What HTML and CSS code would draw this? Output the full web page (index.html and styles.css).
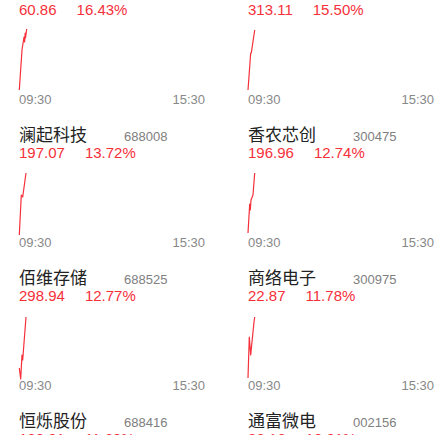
FILE: index.html
```html
<!DOCTYPE html>
<html lang="zh-CN">
<head>
<meta charset="utf-8">
<link rel="stylesheet" href="styles.css">
</head>
<body>
<div class="grid">
  <div class="cell">
    <div class="head"><span class="name">中微半导</span><span class="code">688380</span></div>
    <div class="quote"><span class="price">60.86</span><span class="pct">16.43%</span></div>
    <svg class="chart" viewBox="0 0 186 76"><polyline points="0.3,72 3,32 5,19 5.6,24 6.2,15 6.5,20 7.7,11"/></svg>
    <div class="times"><span>09:30</span><span>15:30</span></div>
  </div>
  <div class="cell">
    <div class="head"><span class="name">兆易创新</span><span class="code">603986</span></div>
    <div class="quote"><span class="price">313.11</span><span class="pct">15.50%</span></div>
    <svg class="chart" viewBox="0 0 186 76"><polyline points="0,72 2.7,35 3.3,35 6.7,12"/></svg>
    <div class="times"><span>09:30</span><span>15:30</span></div>
  </div>
  <div class="cell">
    <div class="head"><span class="name">澜起科技</span><span class="code">688008</span></div>
    <div class="quote"><span class="price">197.07</span><span class="pct">13.72%</span></div>
    <svg class="chart" viewBox="0 0 186 76"><polyline points="0.3,74 2.3,34 3.7,36 7,12"/></svg>
    <div class="times"><span>09:30</span><span>15:30</span></div>
  </div>
  <div class="cell">
    <div class="head"><span class="name">香农芯创</span><span class="code">300475</span></div>
    <div class="quote"><span class="price">196.96</span><span class="pct">12.74%</span></div>
    <svg class="chart" viewBox="0 0 186 76"><polyline points="0,72 1.7,43 2.3,49 3,39 5,34 6.7,12"/></svg>
    <div class="times"><span>09:30</span><span>15:30</span></div>
  </div>
  <div class="cell">
    <div class="head"><span class="name">佰维存储</span><span class="code">688525</span></div>
    <div class="quote"><span class="price">298.94</span><span class="pct">12.77%</span></div>
    <svg class="chart" viewBox="0 0 186 76"><polyline points="0.3,64 1.7,75 3,51 3.7,56 7,13"/></svg>
    <div class="times"><span>09:30</span><span>15:30</span></div>
  </div>
  <div class="cell">
    <div class="head"><span class="name">商络电子</span><span class="code">300975</span></div>
    <div class="quote"><span class="price">22.87</span><span class="pct">11.78%</span></div>
    <svg class="chart" viewBox="0 0 186 76"><polyline points="0,74 1.3,33 2.7,51 6,18 6.7,13"/></svg>
    <div class="times"><span>09:30</span><span>15:30</span></div>
  </div>
  <div class="cell">
    <div class="head"><span class="name">恒烁股份</span><span class="code">688416</span></div>
    <div class="quote"><span class="price">108.01</span><span class="pct">11.69%</span></div>
  </div>
  <div class="cell">
    <div class="head"><span class="name">通富微电</span><span class="code">002156</span></div>
    <div class="quote"><span class="price">36.16</span><span class="pct">10.01%</span></div>
  </div>
</div>
</body>
</html>
```
FILE: styles.css
```css
html, body {
  margin: 0;
  padding: 0;
  background: #ffffff;
  overflow: hidden;
}
body {
  font-family: "Liberation Sans", "Noto Sans CJK SC", sans-serif;
}
.grid {
  display: grid;
  grid-template-columns: 186px 186px;
  column-gap: 43px;
  padding-left: 19px;
  margin-top: -20px;
}
.cell {
  display: flex;
  flex-direction: column;
  height: 143px;
}
.head {
  display: flex;
  align-items: baseline;
  height: 22px;
  line-height: 22px;
}
.name {
  width: 105px;
  flex: none;
  font-family: "Noto Sans CJK SC", sans-serif;
  font-size: 17px;
  color: #222222;
}
.code {
  font-size: 13px;
  color: #808080;
}
.quote {
  display: flex;
  height: 16px;
  line-height: 16px;
  font-size: 15px;
  color: #f5303a;
}
.pct {
  margin-left: 20px;
}
.chart {
  display: block;
  width: 186px;
  height: 76px;
  overflow: visible;
}
.chart polyline {
  fill: none;
  stroke: #f5303a;
  stroke-width: 1.2;
  stroke-linejoin: round;
}
.times {
  display: flex;
  justify-content: space-between;
  height: 12px;
  line-height: 12px;
  font-size: 13px;
  color: #888888;
}
```
